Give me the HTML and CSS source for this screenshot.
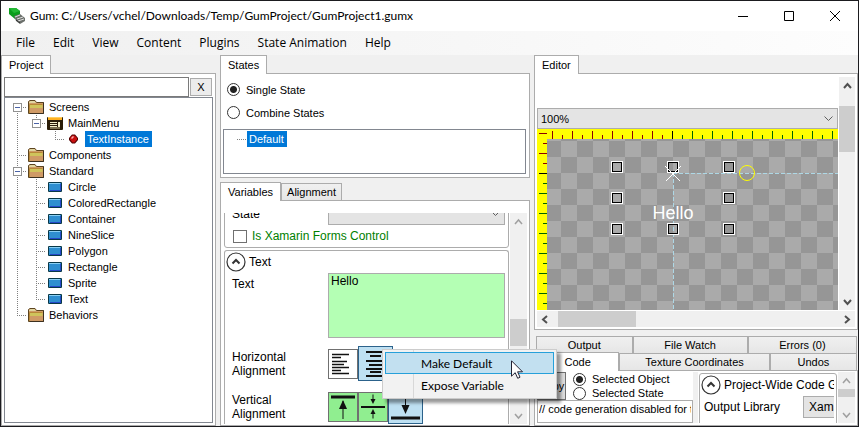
FILE: index.html
```html
<!DOCTYPE html>
<html lang="en">
<head>
<meta charset="utf-8">
<title>Gum: C:/Users/vchel/Downloads/Temp/GumProject/GumProject1.gumx</title>
<link rel="stylesheet" href="styles.css">
</head>
<body>
<svg class="defs" width="0" height="0" aria-hidden="true">
  <defs>
    <symbol id="folder" viewBox="0 0 16 16">
      <path d="M.5 14.500V2.500L2 1.500H7L8.500 3.500H15.500V14.500Z" fill="#cf9a66" stroke="#5c4420"/>
      <path d="M1 4V3L2.500 2H6.500L8 4Z" fill="#e0d5a0"/>
      <path d="M2 5H14.500V9H2Z" fill="#cfc45c"/>
      <path d="M1.500 14V5.500H14.500" fill="none" stroke="#b88838"/>
      <path d="M15.500 3.500V14.500H2" fill="none" stroke="#3c3020"/>
    </symbol>
    <symbol id="screen" viewBox="0 0 16 16">
      <rect x="0" y="2" width="16" height="13" rx="1" fill="#2a1c08"/>
      <rect x="1" y="2" width="14" height="3" fill="#ffb020"/>
      <path d="M1 2.500H15" stroke="#ffd060"/>
      <path d="M3 7.500H10M3 9.500H10M3 11.500H10" stroke="#f4eec8"/>
      <path d="M3 13H13" stroke="#cfc69a"/>
      <path d="M12 7V12" stroke="#f4eec8" stroke-width="2"/>
    </symbol>
    <symbol id="block" viewBox="0 0 16 16">
      <rect x="1" y="3" width="14" height="10" rx="1" fill="#083848"/>
      <rect x="2" y="4" width="12" height="8" fill="#2f8fd0"/>
      <path d="M2 4.500H13" stroke="#8ad0f4"/>
      <path d="M3 11.500H14M13.500 5V12" stroke="#2448c8"/>
    </symbol>
    <symbol id="gem" viewBox="0 0 16 16">
      <path d="M6 3.500H9L12 7V9L9 12.500H6L3 9V7Z" fill="#500000"/>
      <path d="M6 4.500H8.500L11 7V8.500L8.500 11.500H6.500L4 8.500V7Z" fill="#c81010"/>
      <path d="M5.500 7.500L7.500 5.500" stroke="#ffb0b0" stroke-width="1.500"/>
    </symbol>
  </defs>
</svg>
<div class="window">
  <header class="titlebar">
    <svg class="app-icon" viewBox="0 0 16 16" aria-hidden="true">
      <path d="M0 0H7L11 3V8L6 11L0 6Z" fill="#0a9c1c"/>
      <path d="M0 0H7L11 3L5 5Z" fill="#22b834"/>
      <path d="M5 8L11 6L16 10V13L11 16L7 13Z" fill="#6c706c"/>
      <path d="M6 9L11 7M8 11L14 9M9 13L15 11" stroke="#dcdcdc"/>
      <path d="M7 12L11 15" stroke="#303030"/>
    </svg>
    <h1 class="title">Gum: C:/Users/vchel/Downloads/Temp/GumProject/GumProject1.gumx</h1>
    <button class="win-button" aria-label="Minimize"><svg viewBox="0 0 10 10"><path d="M0 5.500H10"/></svg></button>
    <button class="win-button" aria-label="Maximize"><svg viewBox="0 0 10 10"><path d="M.5 .5H9.500V9.500H.5Z"/></svg></button>
    <button class="win-button" aria-label="Close"><svg viewBox="0 0 10 10"><path d="M0 0L10 10M10 0L0 10"/></svg></button>
  </header>
  <nav class="menubar">
    <button>File</button><button>Edit</button><button>View</button><button>Content</button><button>Plugins</button><button>State Animation</button><button>Help</button>
  </nav>
  <main class="workspace">
    <section class="pane project">
      <div class="tabs"><button class="tab active">Project</button></div>
      <div class="pane-body">
        <div class="search">
          <input type="text" aria-label="Search">
          <button>X</button>
        </div>
        <ul class="tree">
          <li><i class="guide first"><b></b></i><svg class="icon"><use href="#folder"/></svg><span>Screens</span></li>
          <li><i class="guide line"></i><i class="guide last"><b></b></i><svg class="icon"><use href="#screen"/></svg><span>MainMenu</span></li>
          <li><i class="guide line"></i><i class="guide"></i><i class="guide last"></i><svg class="icon"><use href="#gem"/></svg><span class="selected">TextInstance</span></li>
          <li><i class="guide tee"></i><svg class="icon"><use href="#folder"/></svg><span>Components</span></li>
          <li><i class="guide tee"><b></b></i><svg class="icon"><use href="#folder"/></svg><span>Standard</span></li>
          <li><i class="guide line"></i><i class="guide tee"></i><svg class="icon"><use href="#block"/></svg><span>Circle</span></li>
          <li><i class="guide line"></i><i class="guide tee"></i><svg class="icon"><use href="#block"/></svg><span>ColoredRectangle</span></li>
          <li><i class="guide line"></i><i class="guide tee"></i><svg class="icon"><use href="#block"/></svg><span>Container</span></li>
          <li><i class="guide line"></i><i class="guide tee"></i><svg class="icon"><use href="#block"/></svg><span>NineSlice</span></li>
          <li><i class="guide line"></i><i class="guide tee"></i><svg class="icon"><use href="#block"/></svg><span>Polygon</span></li>
          <li><i class="guide line"></i><i class="guide tee"></i><svg class="icon"><use href="#block"/></svg><span>Rectangle</span></li>
          <li><i class="guide line"></i><i class="guide tee"></i><svg class="icon"><use href="#block"/></svg><span>Sprite</span></li>
          <li><i class="guide line"></i><i class="guide last"></i><svg class="icon"><use href="#block"/></svg><span>Text</span></li>
          <li><i class="guide last"></i><svg class="icon"><use href="#folder"/></svg><span>Behaviors</span></li>
        </ul>
      </div>
    </section>

    <div class="column">
      <section class="pane states">
        <div class="tabs"><button class="tab active">States</button></div>
        <div class="pane-body">
          <label class="option"><input type="radio" name="state-mode" checked>Single State</label>
          <label class="option"><input type="radio" name="state-mode">Combine States</label>
          <ul class="tree state-tree"><li><i class="stub"></i><span class="selected">Default</span></li></ul>
        </div>
      </section>
      <section class="pane variables">
        <div class="tabs"><button class="tab active">Variables</button><button class="tab">Alignment</button></div>
        <div class="pane-body">
          <div class="scroller">
            <div class="groups">
              <div class="group group-state">
                <div class="field">
                  <label for="state">State</label>
                  <select id="state"><option></option></select>
                </div>
                <label class="check"><input type="checkbox">Is Xamarin Forms Control</label>
              </div>
              <div class="group group-text">
                <div class="group-title"><button class="expander" aria-label="Collapse Text"><svg viewBox="0 0 20 20"><circle cx="10" cy="10" r="9"/><path d="M6.500 11.500L10 8L13.500 11.500"/></svg></button>Text</div>
                <div class="field text-field">
                  <label for="text">Text</label>
                  <textarea id="text">Hello</textarea>
                </div>
                <div class="field align-field">
                  <span class="label">Horizontal<br>Alignment</span>
                  <button class="toggle" aria-label="Left"><svg viewBox="0 0 28 28"><path d="M3 4.500H20M3 7.500H12M3 11.500H18M3 14.500H15M3 17.500H20M3 20.500H12M3 23.500H20" stroke-width="1.500"/></svg></button>
                  <button class="toggle on" aria-label="Center"><svg viewBox="0 0 33 33"><path d="M7 5H26M11 9H22M7 14H26M10 18H23M7 22H26M11 25H22M7 29H26" stroke-width="2"/></svg></button>
                </div>
                <div class="field align-field">
                  <span class="label">Vertical<br>Alignment</span>
                  <button class="toggle green" aria-label="Top"><svg viewBox="0 0 28 28"><path d="M2 4H26" stroke-width="3"/><path d="M14 8V26"/><path class="solid" d="M14 7L18 16H10Z"/></svg></button>
                  <button class="toggle green" aria-label="Middle"><svg viewBox="0 0 28 28"><path d="M2 14H26" stroke-width="2"/><path d="M14 1.500V8M14 20V25.500"/><path class="solid" d="M14 11L11.500 6H16.500ZM14 16L11.500 21H16.500Z"/></svg></button>
                  <button class="toggle on" aria-label="Bottom"><svg viewBox="0 0 33 33"><path d="M2 28H31" stroke-width="3"/><path d="M16.500 4V20"/><path class="solid" d="M16.500 24L12.500 15H20.500Z"/></svg></button>
                </div>
              </div>
            </div>
            <div class="vbar light"><svg viewBox="0 0 17 17"><path d="M5 11L8.500 7L12 11"/></svg><i class="thumb"></i><svg viewBox="0 0 17 17"><path d="M5 7L8.500 11L12 7"/></svg></div>
          </div>
        </div>
      </section>
    </div>

    <div class="column">
      <section class="pane editor">
        <div class="tabs"><button class="tab active">Editor</button></div>
        <div class="pane-body">
          <div class="view">
            <div class="view-main">
              <select class="zoom" aria-label="Zoom"><option>100%</option></select>
              <svg class="canvas" role="img" aria-label="Hello text instance">
                <defs>
                  <pattern id="checker" x="8" y="12" width="32" height="32" patternUnits="userSpaceOnUse">
                    <rect width="32" height="32" fill="#969696"/><path d="M16 0H32V16H16ZM0 16H16V32H0Z" fill="#aaa"/>
                  </pattern>
                  <pattern id="top-red" x="15" width="20" height="10" patternUnits="userSpaceOnUse"><path d="M0 2H1V10H0ZM10 6H11V10H10Z" fill="#8b0000"/></pattern>
                  <pattern id="top-green" x="15" width="20" height="10" patternUnits="userSpaceOnUse"><path d="M0 2H1V10H0ZM10 6H11V10H10Z" fill="#006400"/></pattern>
                  <pattern id="side-red" y="4" width="10" height="20" patternUnits="userSpaceOnUse"><path d="M2 0V1H10V0ZM6 10V11H10V10Z" fill="#8b0000"/></pattern>
                  <pattern id="side-green" y="4" width="10" height="20" patternUnits="userSpaceOnUse"><path d="M2 0V1H10V0ZM6 10V11H10V10Z" fill="#006400"/></pattern>
                  <g id="handle"><rect x="-5.500" y="-5.500" width="11" height="11" fill="none" stroke="#fff"/><rect x="-4.500" y="-4.500" width="9" height="9" fill="none" stroke="#000"/></g>
                </defs>
                <rect width="100%" height="100%" fill="#ff0"/>
                <rect x="10" y="10" width="100%" height="100%" fill="url(#checker)"/>
                <rect x="11" width="120" height="10" fill="url(#top-red)"/>
                <rect x="136" width="100%" height="10" fill="url(#top-green)"/>
                <rect x="135" y="2" width="1" height="8"/>
                <rect y="3" width="10" height="39" fill="url(#side-red)"/>
                <rect y="45" width="10" height="100%" fill="url(#side-green)"/>
                <rect x="2" y="44" width="8" height="1"/>
                <path d="M136.500 44V1000M136 44.500H2000" stroke="#add8e6" stroke-dasharray="4 2" fill="none"/>
                <use href="#handle" x="80" y="38"/><use href="#handle" x="136" y="38"/><use href="#handle" x="192" y="38"/>
                <use href="#handle" x="80" y="69"/><use href="#handle" x="192" y="69"/>
                <use href="#handle" x="80" y="100"/><use href="#handle" x="136" y="100"/><use href="#handle" x="192" y="100"/>
                <path d="M128 37L143 52M144 37L129 52" stroke="#fff"/>
                <circle cx="210" cy="44" r="7.500" fill="none" stroke="#ff0"/>
                <text class="canvas-text" x="136" y="90" text-anchor="middle">Hello</text>
              </svg>
            </div>
            <div class="vbar"><svg viewBox="0 0 17 17"><path d="M5 11L8.500 7L12 11"/></svg><i class="thumb"></i><svg viewBox="0 0 17 17"><path d="M5 7L8.500 11L12 7"/></svg></div>
          </div>
          <div class="hbar"><svg viewBox="0 0 17 17"><path d="M10 5L6 8.500L10 12"/></svg><i class="thumb"></i><svg viewBox="0 0 17 17"><path d="M7 5L11 8.500L7 12"/></svg></div>
        </div>
      </section>
      <section class="pane output">
        <div class="tab-row"><button class="tab">Output</button><button class="tab">File Watch</button><button class="tab">Errors (0)</button></div>
        <div class="tab-row front"><button class="tab active">Code</button><button class="tab">Texture Coordinates</button><button class="tab">Undos</button></div>
        <div class="pane-body">
          <div class="code">
            <div class="code-tools">
              <button class="copy">Copy</button>
              <div>
                <label class="option"><input type="radio" name="code-scope" checked>Selected Object</label>
                <label class="option"><input type="radio" name="code-scope">Selected State</label>
              </div>
            </div>
            <input class="code-text" type="text" aria-label="Generated code" value="// code generation disabled for this object" readonly>
          </div>
          <div class="settings">
            <div class="group">
              <div class="group-title"><button class="expander" aria-label="Collapse settings"><svg viewBox="0 0 20 20"><circle cx="10" cy="10" r="9"/><path d="M6.500 11.500L10 8L13.500 11.500"/></svg></button>Project-Wide Code Generation</div>
              <div class="field"><label for="library">Output Library</label><select id="library"><option>XamarinForms</option></select></div>
            </div>
          </div>
          <div class="vbar light"><svg viewBox="0 0 17 17"><path d="M5 11L8.500 7L12 11"/></svg><i class="thumb"></i><svg viewBox="0 0 17 17"><path d="M5 7L8.500 11L12 7"/></svg></div>
        </div>
      </section>
    </div>
  </main>
  <div class="context-menu" role="menu">
    <button class="hover" role="menuitem">Make Default</button>
    <button role="menuitem">Expose Variable</button>
  </div>
  <svg class="cursor" viewBox="0 0 12 19" aria-hidden="true"><path d="M.5 .8V16.200L4.200 12.700L6.700 18.300L9 17.200L6.600 11.800H11.500Z" fill="#fff" stroke="#223"/></svg>
</div>
</body>
</html>
```
FILE: styles.css
```css
* { box-sizing: border-box; }

body {
  margin: 0;
  font: 12px/16px "Liberation Sans", Arial, sans-serif;
  color: #000;
}

button, input, select, textarea { font: inherit; color: inherit; margin: 0; padding: 0; }
button { white-space: nowrap; }
ul { list-style: none; margin: 0; padding: 0; }
.defs { position: absolute; }

.window {
  position: relative;
  display: flex;
  flex-direction: column;
  height: 100vh;
  border: 1px solid #1b1b1f;
  background: #f0f0f0;
  overflow: hidden;
}

/* Title bar and menu */
.titlebar { display: flex; align-items: center; height: 30px; padding-left: 8px; background: #fff; }
.app-icon { width: 16px; height: 16px; }
.title { flex: 1; margin: 0 0 0 5px; font: 12px/16px Lato, "Open Sans", sans-serif; }
.win-button { display: grid; place-items: center; width: 46px; height: 28px; border: 0; background: none; }
.win-button svg { width: 10px; height: 10px; fill: none; stroke: #000; }
.menubar {
  display: flex;
  height: 24px;
  padding-left: 6px;
  background: linear-gradient(90deg, #f0f0f0, #fdfdfd);
}
.menubar button { border: 0; background: none; padding: 0 9px; font: 12px/24px "Open Sans", sans-serif; }

/* Panes */
.workspace {
  flex: 1;
  min-height: 0;
  display: grid;
  grid-template-columns: 215fr 310fr 324fr;
  gap: 4px;
}
.column { display: flex; flex-direction: column; gap: 4px; min-width: 0; min-height: 0; }
.pane { display: flex; flex-direction: column; min-width: 0; min-height: 0; }
.pane-body { flex: 1; min-height: 0; border: 1px solid #acacac; background: #fff; }
.tabs { display: flex; align-items: flex-end; }
.tab {
  height: 17px;
  padding: 0 5px;
  border: 1px solid #acacac;
  border-bottom: 0;
  background: linear-gradient(#f0f0f0, #e6e6e6);
  font-size: 11px;
  line-height: 15px;
}
.tab.active { position: relative; height: 19px; margin-bottom: -1px; padding: 0 7px; background: #fff; }

/* Project tree */
.project .pane-body { display: flex; flex-direction: column; padding: 3px 2px 2px; }
.search { display: flex; gap: 1px; }
.search input { flex: 1; min-width: 0; height: 20px; border: 1px solid #7a7a7a; background: #fff; }
.search button { width: 22px; height: 18px; margin: 1px 1px 0 0; border: 1px solid #acacac; background: #ececec; font-size: 11px; line-height: 14px; }
.tree { border: 1px solid #828790; background: #fff; font-size: 11px; }
.project .tree { flex: 1; padding: 1px 0 0 3px; }
.tree li { display: flex; height: 16px; }
.tree span { padding: 0 3px 0 2px; margin-left: 3px; }
.tree .selected { background: #0078d7; color: #fff; }
.icon { width: 16px; height: 16px; margin-left: 1px; }
.icon + span { margin-left: 3px; }
.guide { position: relative; width: 19px; height: 16px; background-repeat: no-repeat; }
.guide + .icon { margin: 0 0 0 1px; }
.guide b {
  position: absolute;
  left: 5px;
  top: 4px;
  width: 9px;
  height: 9px;
  border: 1px solid #919191;
  background: linear-gradient(#4b63a7, #4b63a7) 1px 3px / 5px 1px no-repeat #fff;
}
.guide.line, .guide.tee, .guide.last, .guide.first {
  --down: repeating-linear-gradient(#808080 0 1px, #fff 1px 2px);
  --across: repeating-linear-gradient(90deg, #808080 0 1px, #fff 1px 2px);
}
.guide.line { background-image: var(--down); background-size: 1px 16px; background-position: 9px 0; }
.guide.tee { background-image: var(--down), var(--across); background-size: 1px 16px, 10px 1px; background-position: 9px 0, 9px 8px; }
.guide.last { background-image: var(--down), var(--across); background-size: 1px 9px, 10px 1px; background-position: 9px 0, 9px 8px; }
.guide.first { background-image: var(--down), var(--across); background-size: 1px 8px, 10px 1px; background-position: 9px 8px, 9px 8px; }

/* Radio buttons and check boxes */
.option { display: flex; align-items: center; gap: 6px; font-size: 11px; }
.option input {
  appearance: none;
  width: 13px;
  height: 13px;
  border: 1px solid #333;
  border-radius: 50%;
  background: #fff;
}
.option input:checked { background: radial-gradient(circle, #222 3px, #fff 4px); }
.check { display: flex; align-items: center; gap: 5px; color: #008000; }
.check input { appearance: none; width: 14px; height: 13px; border: 1px solid #707070; background: #fff; }

/* States */
.states { height: 123px; }
.states .pane-body { padding: 4px 3px 3px 2px; display: flex; flex-direction: column; }
.states .option { height: 23px; padding-left: 4px; }
.state-tree { flex: 1; margin-top: 5px; padding: 1px 0 0 13px; }
.stub { width: 10px; height: 9px; background: repeating-linear-gradient(90deg, #808080 0 1px, #fff 1px 2px) 0 8px / 10px 1px no-repeat; }
.state-tree span { margin: 0; }

/* Variables */
.variables { flex: 1; }
.variables .pane-body { padding: 12px 2px 1px 3px; }
.scroller { display: flex; height: 100%; overflow: hidden; }
.groups { flex: 1; min-width: 0; display: flex; flex-direction: column; justify-content: flex-end; gap: 2px; margin-right: 1px; overflow: hidden; }
.group { border: 1px solid #acacac; border-radius: 3px; background: #fff; }
.group-state { padding: 0 3px 0 3px; }
.group-text { height: 174px; flex: none; border-bottom: 0; border-radius: 3px 3px 0 0; padding-right: 3px; overflow: hidden; }
.field { display: flex; }
.field label, .field .label { width: 103px; padding-left: 7px; line-height: 14px; }
select {
  appearance: none;
  border: 1px solid #acacac;
  border-radius: 0;
  background: url("data:image/svg+xml,%3Csvg xmlns='http://www.w3.org/2000/svg' width='9' height='6'%3E%3Cpath d='M.5 .5L4.500 4.500L8.500 .5' fill='none' stroke='%23606060'/%3E%3C/svg%3E") right 4px center no-repeat #e4e4e4;
}
.group-state .field { height: 22px; }
.group-state label { padding-left: 4px; }
.group-state .field label { width: 100px; padding-top: 4px; }
.group-state select { flex: 1; height: 22px; }
.group-state .check { height: 22px; padding-left: 5px; }
.group-title { display: flex; align-items: center; gap: 3px; height: 22px; padding-left: 1px; white-space: nowrap; }
.expander { display: flex; border: 0; background: none; }
.expander svg { width: 20px; height: 20px; fill: none; stroke: #333; stroke-width: 1.2px; }
.expander path { stroke-width: 2px; }
.text-field label { padding-top: 4px; }
textarea { flex: 1; height: 65px; padding: 0 2px; border: 1px solid #acacac; background: #b4ffb4; resize: none; line-height: 15px; }
.align-field { align-items: center; height: 35px; margin-top: 8px; }
.toggle { display: grid; place-items: center; width: 30px; height: 30px; border: 1px solid #707070; background: #fff; }
.toggle svg { width: 100%; height: 100%; fill: none; stroke: #111; }
.toggle .solid { fill: #111; stroke: none; }
.toggle.green { background: #90ee90; }
.toggle.on { width: 35px; height: 35px; border-color: #2c628b; background: #bee0f2; }

/* Scroll bars */
.vbar, .hbar { display: flex; background: #f0f0f0; }
.vbar { flex: none; flex-direction: column; width: 17px; }
.hbar { height: 16px; }
.vbar svg, .hbar svg { flex: none; width: 17px; height: 17px; fill: none; stroke: #505050; stroke-width: 2px; }
.vbar.light svg { stroke: #a0a0a0; stroke-width: 1.5px; }
.vbar svg:last-child { margin-top: auto; }
.hbar svg:last-child { margin-left: auto; }
.thumb { background: #cdcdcd; }
.variables .thumb { height: 27px; margin-top: 89px; }
.editor .vbar { width: 16px; margin-left: 1px; }
.editor .vbar .thumb { height: 46px; margin-top: 12px; }
.hbar .thumb { width: 78px; margin-left: 4px; }
.output .thumb { height: 8px; }

/* Editor */
.editor { height: 275px; }
.editor .pane-body { display: flex; flex-direction: column; gap: 1px; padding: 3px 2px 2px; }
.view { flex: 1; display: flex; min-height: 0; }
.view-main { flex: 1; display: flex; flex-direction: column; min-width: 0; padding-top: 31px; }
.zoom { height: 21px; padding: 0 3px; font-size: 11px; }
.canvas { flex: 1; width: 100%; min-height: 0; }
.canvas-text { font: 18px "Liberation Sans", Arial, sans-serif; fill: #fff; }

/* Output and code */
.output { flex: 1; padding-top: 2px; }
.tab-row { display: flex; padding: 0 1px 0 2px; }
.tab-row .tab { flex: 115 0 0; padding: 0; }
.tab-row .tab:first-child { flex-grow: 96; }
.tab-row .tab:last-child { flex-grow: 109; }
.tab-row.front { align-items: flex-end; height: 17px; }
.tab-row.front .tab { flex-grow: 152; }
.tab-row.front .tab:first-child { flex-grow: 83; }
.tab-row.front .tab:last-child { flex-grow: 87; }
.output .pane-body { display: flex; padding: 1px 2px 2px; overflow: hidden; }
.code { flex: 1; min-width: 0; display: flex; flex-direction: column; }
.code-tools { display: flex; gap: 7px; }
.copy { width: 29px; height: 28px; border: 1px solid #707070; background: #ddd; font-size: 11px; }
.code .option { height: 14px; }
.code-text { flex: 1; min-height: 0; padding: 0 1px 6px; border: 1px solid #acacac; font-size: 11px; }
.settings { width: 145px; padding: 1px 1px 0 1px; border-left: 5px solid #f0f0f0; overflow: hidden; }
.settings .group { height: 60px; padding-right: 2px; overflow: hidden; }
.settings .group-title, .settings .field { overflow: hidden; }
.settings .field label { width: 103px; flex: none; padding: 4px 0 0 4px; }
.settings select { flex: none; width: 80px; height: 22px; padding-left: 5px; }

/* Context menu */
.context-menu {
  position: absolute;
  left: 381px;
  top: 348px;
  width: 175px;
  padding: 2px;
  border: 1px solid #ccc;
  background: linear-gradient(#d8d8d8, #d8d8d8) 30px 0 / 1px 100% no-repeat #f2f2f2;
  box-shadow: 4px 4px 3px rgba(0, 0, 0, .4);
}
.context-menu button {
  display: block;
  width: 100%;
  height: 22px;
  padding: 0 0 0 35px;
  border: 1px solid transparent;
  background: none;
  text-align: left;
  font: 12px/22px Lato, "Open Sans", sans-serif;
}
.context-menu .hover { border-color: #26a0da; background: #c2e0f0; }
.cursor { position: absolute; left: 510px; top: 359px; width: 12px; height: 19px; }
```
